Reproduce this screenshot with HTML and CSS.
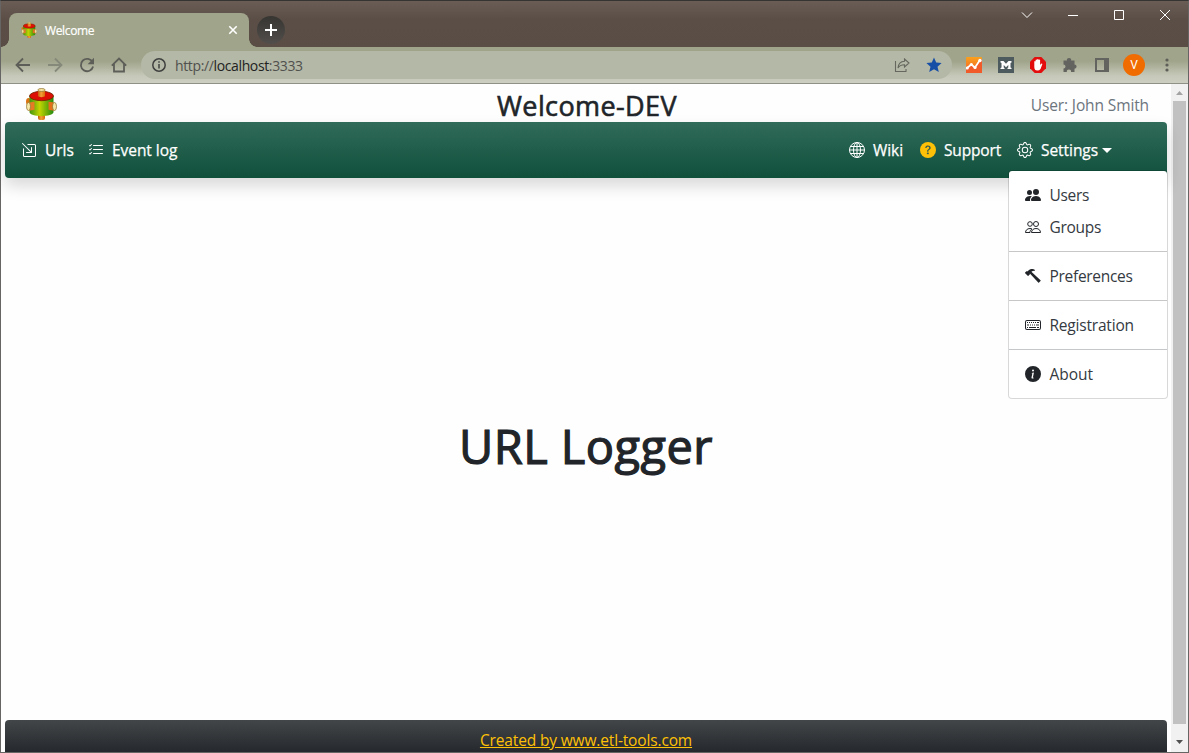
FILE: index.html
```
<!DOCTYPE html>
<html lang="en">
<head>
<meta charset="utf-8">
<title>Welcome</title>
<link rel="stylesheet" href="styles.css">
</head>
<body>
<svg class="defs" width="0" height="0" aria-hidden="true">
  <defs>
    <linearGradient id="can"><stop offset="0" stop-color="#3f9412"/><stop offset=".42" stop-color="#c3d400"/><stop offset="1" stop-color="#238a10"/></linearGradient>
    <linearGradient id="pipe"><stop offset="0" stop-color="#c85c08"/><stop offset=".45" stop-color="#f2a238"/><stop offset="1" stop-color="#d96b08"/></linearGradient>
    <linearGradient id="chart" x2="0" y2="1"><stop offset="0" stop-color="#f9a11d"/><stop offset="1" stop-color="#f15a29"/></linearGradient>
    <symbol id="logo" viewBox="0 0 32 32">
      <rect x="13" y="26" width="7" height="6" rx="2" fill="url(#pipe)"/>
      <ellipse cx="3.500" cy="13.500" rx="2.500" ry="3.500" fill="#dc7511"/>
      <path d="M4.500 8v16c0 5.500 24 5.500 24 0V8z" fill="url(#can)"/>
      <ellipse cx="16.500" cy="8" rx="12" ry="4.700" fill="#dc1004" stroke="#6f2500" stroke-width=".8"/>
      <path d="M13 2.500h7v5.500c0 1.500-7 1.500-7 0z" fill="url(#pipe)"/>
      <ellipse cx="16.500" cy="2" rx="3.700" ry="1.500" fill="#f6e49e" stroke="#8a6b25" stroke-width=".7"/>
      <path d="M4 14.500l5.500-.7v8l-5.500 1z" fill="#e57b25"/>
      <ellipse cx="3.500" cy="18.500" rx="2" ry="4" fill="#f7e9aa" stroke="#8a6b25" stroke-width=".7"/>
      <path d="M29 14.500l-5.500-.7v8l5.500 1z" fill="#e5701a"/>
      <ellipse cx="29.500" cy="18.500" rx="2" ry="4" fill="#f7e9aa" stroke="#8a6b25" stroke-width=".7"/>
    </symbol>
  </defs>
</svg>
<div class="window">
  <header class="titlebar">
    <div class="tab">
      <svg class="favicon"><use href="#logo"/></svg>
      <span class="tab-title">Welcome</span>
      <svg class="tab-close" viewBox="0 0 10 10"><path d="M1.300 1.300l7.400 7.400M8.700 1.300l-7.400 7.400"/></svg>
    </div>
    <div class="new-tab"><svg width="12" height="12" viewBox="0 0 12 12"><path d="M6 0v12M0 6h12"/></svg></div>
    <div class="controls">
      <svg viewBox="0 0 12 12"><path d="M1 3.500l5 5 5-5"/></svg>
      <svg viewBox="0 0 12 12"><path d="M1 6.500h10"/></svg>
      <svg viewBox="0 0 12 12"><path d="M1.500 1.500h9v9h-9z"/></svg>
      <svg viewBox="0 0 12 12"><path d="M1 1l10 10M11 1L1 11"/></svg>
    </div>
  </header>
  <div class="toolbar">
    <div class="nav-buttons">
      <svg viewBox="0 0 16 16"><path d="M15 8H2M8 1.500L1.500 8 8 14.500"/></svg>
      <svg class="disabled" viewBox="0 0 16 16"><path d="M1 8h13M8 1.500L14.500 8 8 14.500"/></svg>
      <svg viewBox="0 0 16 16"><path d="M13.600 5.200A6.200 6.200 0 1 0 14.100 9.500"/><path class="solid" d="M15 .8v6.400H8.600z"/></svg>
      <svg viewBox="0 0 16 16"><path d="M3 7v7.500h10V7M.8 8.700L8 1.600l7.200 7.100"/></svg>
    </div>
    <div class="omnibox">
      <svg class="site-info" viewBox="0 0 14 14"><circle cx="7" cy="7" r="6.200"/><path d="M7 6v4.500M7 3.200v1.600"/></svg>
      <span class="url">http://<b>localhost</b>:3333</span>
      <svg class="share" viewBox="0 0 16 14"><path d="M1.500 3v10.500H12V11M10.500 1L15 5l-4.500 4V6.700C7 6.700 5 8 4 10 4.300 6 7 3.500 10.500 3.300z"/></svg>
      <svg class="star" viewBox="0 0 16 16"><path d="M8 .6l2.200 5 5.400.5-4.100 3.600 1.300 5.400L8 12.200l-4.800 2.900 1.300-5.400L.4 6.100l5.400-.5z"/></svg>
    </div>
    <div class="extensions">
      <svg viewBox="0 0 16 16"><rect width="16" height="16" rx="1" fill="url(#chart)"/><path fill="#f15a29" d="M0 11l5-3.500 4 3 5-7L16 2v14H0z"/><path d="M1 11l4.300-3.500 3.700 3L14 3" fill="none" stroke="#fff" stroke-width="1.700"/><g fill="#fff"><circle cx="1.300" cy="11" r="1.500"/><circle cx="5.300" cy="7.500" r="1.600"/><circle cx="9" cy="10.500" r="1.600"/><circle cx="14" cy="3.500" r="1.700"/></g></svg>
      <svg viewBox="0 0 16 16"><path fill="#4d5a5e" d="M0 0h16v16H0z"/><path fill="#fff" d="M2.500 4h3L8 6.800 10.500 4h3v1.500l-1 .5v4.500l1 .5v1h-4v-1l.8-.5V8L8 10.300 5.700 8v2.500l.8.500v1h-4v-1l1-.5V6l-1-.5z"/></svg>
      <svg viewBox="0 0 16 16"><path fill="#e40d0d" d="M4.700 0h6.600L16 4.700v6.600L11.300 16H4.700L0 11.300V4.700z"/><path fill="#fff" d="M4.300 4.500q.7-.8 1.300 0V3q.8-.9 1.500 0v-.5q.8-.9 1.500 0V3q.8-.8 1.500 0v5l1-1.300q1-.5 1.300.2L10.500 12q-1 1.500-3.200 1.500-3 0-3-3.500z"/></svg>
      <svg viewBox="0 0 16 16"><path fill="#63645f" d="M1.500 3.500H5a2.100 2.100 0 1 1 4.100 0h3.400v4a2.100 2.100 0 1 1 0 4.200V15H9a2.100 2.100 0 1 0-4.100 0H1.500v-3.600a2 2 0 1 0 0-4z"/></svg>
      <svg viewBox="0 0 16 16"><path fill="#63645f" fill-rule="evenodd" d="M1 1h14v14H1zM3 3v10h7V3z"/></svg>
    </div>
    <div class="avatar">V</div>
    <svg class="kebab" viewBox="0 0 4 14"><circle cx="2" cy="2" r="1.600"/><circle cx="2" cy="7" r="1.600"/><circle cx="2" cy="12" r="1.600"/></svg>
  </div>
  <div class="viewport">
    <div class="page">
      <div class="heading">
        <svg class="logo"><use href="#logo"/></svg>
        <h3>Welcome-DEV</h3>
        <span class="user">User: John Smith</span>
      </div>
      <nav class="navbar">
        <a class="nav-link w-urls"><svg class="bi" viewBox="0 0 16 16"><path d="M6.364 2.500a.5.5 0 0 1 .5-.5H13.500A1.500 1.500 0 0 1 15 3.500v10a1.500 1.500 0 0 1-1.500 1.500h-10A1.500 1.500 0 0 1 2 13.500V6.864a.5.5 0 1 1 1 0V13.500a.5.5 0 0 0 .5.5h10a.5.5 0 0 0 .5-.5v-10a.5.5 0 0 0-.5-.5H6.864a.5.5 0 0 1-.5-.5z"/><path d="M11 10.500a.5.5 0 0 1-.5.5h-5a.5.5 0 0 1 0-1h3.793L1.146 1.854a.5.5 0 1 1 .708-.708L10 9.293V5.500a.5.5 0 0 1 1 0v5z"/></svg><span>Urls</span></a>
        <a class="nav-link w-log"><svg class="bi" viewBox="0 0 16 16"><path d="M5 11.500a.5.5 0 0 1 .5-.5h9a.5.5 0 0 1 0 1h-9a.5.5 0 0 1-.5-.5zm0-4a.5.5 0 0 1 .5-.5h9a.5.5 0 0 1 0 1h-9a.5.5 0 0 1-.5-.5zm0-4a.5.5 0 0 1 .5-.5h9a.5.5 0 0 1 0 1h-9a.5.5 0 0 1-.5-.5zM3.854 2.146a.5.5 0 0 1 0 .708l-1.500 1.500a.5.5 0 0 1-.708 0l-.5-.5a.5.5 0 1 1 .708-.708L2 3.293l1.146-1.147a.5.5 0 0 1 .708 0zm0 4a.5.5 0 0 1 0 .708l-1.500 1.500a.5.5 0 0 1-.708 0l-.5-.5a.5.5 0 1 1 .708-.708L2 7.293l1.146-1.147a.5.5 0 0 1 .708 0zm0 4a.5.5 0 0 1 0 .708l-1.500 1.500a.5.5 0 0 1-.708 0l-.5-.5a.5.5 0 0 1 .708-.708l.146.147 1.146-1.147a.5.5 0 0 1 .708 0z"/></svg><span>Event log</span></a>
        <a class="nav-link w-wiki"><svg class="bi stroked" viewBox="0 0 16 16"><circle cx="8" cy="8" r="7.500"/><ellipse cx="8" cy="8" rx="3.500" ry="7.500"/><path d="M8 .5v15M.5 8h15M1.800 4.500h12.400M1.800 11.500h12.400"/></svg><span>Wiki</span></a>
        <a class="nav-link w-support"><svg class="bi" viewBox="0 0 16 16"><circle cx="8" cy="8" r="8" fill="#ffc107"/><path fill="#385d4c" d="M5.255 5.786a.237.237 0 0 0 .241.247h.825c.138 0 .248-.113.266-.250.090-.656.540-1.134 1.342-1.134.686 0 1.314.343 1.314 1.168 0 .635-.374.927-.965 1.371-.673.489-1.206 1.060-1.168 1.987l.003.217a.250.250 0 0 0 .250.246h.811a.250.250 0 0 0 .250-.250v-.105c0-.718.273-.927 1.010-1.486.609-.463 1.244-.977 1.244-2.056 0-1.511-1.276-2.241-2.673-2.241-1.267 0-2.655.590-2.750 2.286zm1.557 5.763c0 .533.425.927 1.010.927.609 0 1.028-.394 1.028-.927 0-.552-.420-.940-1.029-.940-.584 0-1.009.388-1.009.940z"/></svg><span>Support</span></a>
        <div class="settings">
          <a class="nav-link"><svg class="bi" viewBox="0 0 16 16"><path d="M8 4.754a3.246 3.246 0 1 0 0 6.492 3.246 3.246 0 0 0 0-6.492zM5.754 8a2.246 2.246 0 1 1 4.492 0 2.246 2.246 0 0 1-4.492 0z"/><path d="M9.796 1.343c-.527-1.790-3.065-1.790-3.592 0l-.094.319a.873.873 0 0 1-1.255.520l-.292-.160c-1.640-.892-3.433.902-2.540 2.541l.159.292a.873.873 0 0 1-.520 1.255l-.319.094c-1.790.527-1.790 3.065 0 3.592l.319.094a.873.873 0 0 1 .520 1.255l-.160.292c-.892 1.640.901 3.434 2.541 2.540l.292-.159a.873.873 0 0 1 1.255.520l.094.319c.527 1.790 3.065 1.790 3.592 0l.094-.319a.873.873 0 0 1 1.255-.520l.292.160c1.640.893 3.434-.902 2.540-2.541l-.159-.292a.873.873 0 0 1 .520-1.255l.319-.094c1.790-.527 1.790-3.065 0-3.592l-.319-.094a.873.873 0 0 1-.520-1.255l.160-.292c.893-1.640-.902-3.433-2.541-2.540l-.292.159a.873.873 0 0 1-1.255-.520l-.094-.319zm-2.633.283c.246-.835 1.428-.835 1.674 0l.094.319a1.873 1.873 0 0 0 2.693 1.115l.291-.160c.764-.415 1.600.420 1.184 1.185l-.159.292a1.873 1.873 0 0 0 1.116 2.692l.318.094c.835.246.835 1.428 0 1.674l-.319.094a1.873 1.873 0 0 0-1.115 2.693l.160.291c.415.764-.420 1.600-1.185 1.184l-.291-.159a1.873 1.873 0 0 0-2.693 1.116l-.094.318c-.246.835-1.428.835-1.674 0l-.094-.319a1.873 1.873 0 0 0-2.692-1.115l-.292.160c-.764.415-1.600-.420-1.184-1.185l.159-.291A1.873 1.873 0 0 0 1.945 8.930l-.319-.094c-.835-.246-.835-1.428 0-1.674l.319-.094A1.873 1.873 0 0 0 3.060 4.377l-.160-.292c-.415-.764.420-1.600 1.185-1.184l.292.159a1.873 1.873 0 0 0 2.692-1.115l.094-.319z"/></svg><span>Settings</span><i class="caret"></i></a>
          <div class="dropdown">
            <a class="item i-users"><svg class="bi" viewBox="0 0 16 16"><path d="M7 14s-1 0-1-1 1-4 5-4 5 3 5 4-1 1-1 1H7zm4-6a3 3 0 1 0 0-6 3 3 0 0 0 0 6zM5.216 14A2.238 2.238 0 0 1 5 13c0-1.355.680-2.750 1.936-3.720A6.325 6.325 0 0 0 5 9c-4 0-5 3-5 4s1 1 1 1h4.216zM4.500 8a2.500 2.500 0 1 0 0-5 2.500 2.500 0 0 0 0 5z"/></svg><span>Users</span></a>
            <a class="item i-groups"><svg class="bi stroked" viewBox="0 0 16 16"><circle cx="11" cy="5" r="2.500"/><circle cx="5" cy="5" r="2.300"/><path d="M6.500 13.500h9c0-2-1.500-4-4.500-4s-4.500 2-4.500 4zM5 13.500H.5c0-2 1.500-4 4.500-4 1 0 1.500.2 2 .5M5 13.500c0-1.500.6-2.800 2-3.500"/></svg><span>Groups</span></a>
            <hr>
            <a class="item i-pref"><svg class="bi" viewBox="0 0 16 16"><path d="M9.972 2.508a.5.5 0 0 0-.160-.556l-.178-.129a5.009 5.009 0 0 0-2.076-.783C6.215.862 4.504 1.229 2.840 3.133H1.786a.5.5 0 0 0-.354.147L.146 4.567a.5.5 0 0 0 0 .706l2.571 2.579a.5.5 0 0 0 .708 0l1.286-1.290a.5.5 0 0 0 .146-.353V5.570l8.387 8.873A.5.5 0 0 0 14 14.500l1.500-1.500a.5.5 0 0 0 .017-.689l-9.129-8.630c.747-.456 1.772-.839 3.112-.839a.5.5 0 0 0 .472-.334z"/></svg><span>Preferences</span></a>
            <hr>
            <a class="item i-reg"><svg class="bi" viewBox="0 0 16 16"><path fill-rule="evenodd" d="M2 3h12a2 2 0 0 1 2 2v6a2 2 0 0 1-2 2H2a2 2 0 0 1-2-2V5a2 2 0 0 1 2-2zm0 1a1 1 0 0 0-1 1v6a1 1 0 0 0 1 1h12a1 1 0 0 0 1-1V5a1 1 0 0 0-1-1z"/><path d="M2 5h1v1H2zM4 5h1v1H4zM6 5h1v1H6zM8 5h1v1H8zM10 5h1v1h-1zM12 5h2v1h-2zM2 7.500h2v1H2zM5 7.500h1v1H5zM7 7.500h1v1H7zM9 7.500h1v1H9zM11 7.500h3v1h-3zM2 10h1v1H2zM4 10h7v1H4zM12 10h2v1h-2z"/></svg><span>Registration</span></a>
            <hr>
            <a class="item i-about"><svg class="bi" viewBox="0 0 16 16"><path d="M8 16A8 8 0 1 0 8 0a8 8 0 0 0 0 16zm.930-9.412-1 4.705c-.070.340.029.533.304.533.194 0 .487-.070.686-.246l-.088.416c-.287.346-.920.598-1.465.598-.703 0-1.002-.422-.808-1.319l.738-3.468c.064-.293.006-.399-.287-.470l-.451-.081.082-.381 2.290-.287zM8 5.500a1 1 0 1 1 0-2 1 1 0 0 1 0 2z"/></svg><span>About</span></a>
          </div>
        </div>
      </nav>
      <main><h1>URL Logger</h1></main>
      <footer><a>Created by www.etl-tools.com</a></footer>
    </div>
    <div class="scrollbar">
      <svg viewBox="0 0 7 4"><path fill="#a3a3a3" d="M0 4L3.500 0 7 4z"/></svg>
      <div class="thumb"></div>
      <svg viewBox="0 0 7 4"><path fill="#505050" d="M0 0h7L3.500 4z"/></svg>
    </div>
  </div>
</div>
</body>
</html>
```
FILE: styles.css
```
* { box-sizing: border-box; }
body { margin: 0; font-family: "Open Sans", "Noto Sans", sans-serif; color: #212529; }
.defs { display: block; }
svg { flex: none; }
.window { width: 1189px; height: 753px; border: 1px solid #666563; border-top-color: #353432; display: flex; flex-direction: column; overflow: hidden; background: #fff; }

.titlebar { height: 46px; flex: none; display: flex; padding-left: 8px; background: linear-gradient(#695d56, #5b4e46 40%, #5a4d45); }
.tab { position: relative; width: 240px; height: 34px; margin-top: 12px; padding: 0 11px 0 12px; display: flex; align-items: center; background: #9fa48a; border-radius: 8px 8px 0 0; color: #fff; font-size: 12px; }
.tab::before, .tab::after { content: ""; position: absolute; bottom: 0; width: 8px; height: 8px; }
.tab::before { left: -8px; background: radial-gradient(circle at 0 0, transparent 7.5px, #9fa48a 8px); }
.tab::after { right: -8px; background: radial-gradient(circle at 100% 0, transparent 7.5px, #9fa48a 8px); }
.favicon { width: 16px; height: 16px; }
.tab-title { margin-left: 8px; letter-spacing: -.35px; flex: 1; -webkit-text-stroke: .2px; }
.tab-close { width: 10px; height: 10px; stroke: #fff; stroke-width: 1.6; }
.new-tab { width: 28px; height: 28px; margin: 15px 0 0 8px; border-radius: 50%; background: linear-gradient(#373532, #514e4b); display: flex; align-items: center; justify-content: center; }
.new-tab path { stroke: #fff; stroke-width: 2; }
.controls { margin-left: auto; padding: 8px 17px 0 0; display: flex; gap: 34px; }
.controls svg { width: 12px; height: 12px; fill: none; stroke: #fff; }

.toolbar { height: 37px; flex: none; display: flex; align-items: center; padding: 0 17px 1px 14px; background: linear-gradient(#9fa48a 0, #9fa48a 38%, #c6c9b9 78%, #cccfc1 97%, #8e9185 97%); }
.nav-buttons { display: flex; gap: 16px; width: 126px; }
.nav-buttons svg { width: 16px; height: 16px; fill: none; stroke: #5d5e58; stroke-width: 1.8; }
.nav-buttons .disabled { stroke: #85897a; }
.nav-buttons .solid { fill: #5d5e58; stroke: none; }
.omnibox { width: 811px; height: 28px; padding: 0 10px 0 11px; border-radius: 14px; background: #b4b8a6; display: flex; align-items: center; }
.site-info { width: 14px; height: 14px; fill: none; stroke: #3f403f; stroke-width: 1.5; }
.url { flex: 1; margin-left: 9px; font-size: 14px; letter-spacing: -.37px; color: #50514e; }
.url b { font-weight: 400; color: #222; }
.share { width: 16px; height: 14px; fill: none; stroke: #66685f; stroke-width: 1.1; margin-right: 16px; }
.star { width: 16px; height: 16px; fill: #174ea6; }
.extensions { display: flex; gap: 16px; margin-left: 14px; }
.extensions svg { width: 16px; height: 16px; }
.avatar { width: 22px; height: 22px; margin-left: 13px; border-radius: 50%; background: #f06c00; color: #fff; font: 12px/22px Roboto, sans-serif; text-align: center; }
.kebab { width: 4px; height: 14px; margin-left: auto; margin-right: 2px; fill: #5d5e58; }

.viewport { flex: 1; display: flex; min-height: 0; }
.page { flex: 1; min-width: 0; display: flex; flex-direction: column; padding: 0 4px; background: #fefefe; }
.heading { height: 38px; flex: none; display: grid; grid-template-columns: 1fr auto 1fr; align-items: start; padding: 0 18px 0 20px; }
.logo { width: 32px; height: 32px; margin-top: 4px; }
.heading h3 { margin: 5px 0 0; font-size: 27px; line-height: 34px; font-weight: 500; letter-spacing: .4px; -webkit-text-stroke: .6px; }
.user { justify-self: end; margin-top: 9px; font-size: 15.500px; line-height: 24px; color: #6c757d; letter-spacing: -.12px; }

.navbar { position: relative; z-index: 1; height: 56px; flex: none; display: flex; align-items: center; padding-left: 16px; border-radius: 4px; background: linear-gradient(#316b5a, #0f503b); box-shadow: 0 8px 16px rgba(0,0,0,.15); color: #fff; }
.nav-link { display: flex; align-items: center; gap: 8px; font-size: 15.500px; line-height: 24px; white-space: nowrap; letter-spacing: -.05px; }
.nav-link span { -webkit-text-stroke: .25px; }
.bi { width: 16px; height: 16px; fill: currentColor; }
.bi.stroked { fill: none; stroke: currentColor; }
.w-urls { width: 67px; }
.w-log { width: 761px; }
.w-wiki { width: 71px; }
.w-support { width: 97px; letter-spacing: -.15px; }
.settings { position: relative; width: 150px; }
.caret { margin-left: -4px; border: 5px solid transparent; border-top-color: #fff; border-bottom: 0; }
.dropdown { position: absolute; top: 32px; right: -1px; width: 160px; height: 229px; padding: 8px 0; background: #fff; background-clip: padding-box; border: 1px solid rgba(0,0,0,.15); border-radius: 4px; color: #212529; }
.item { height: 32px; padding-left: 16px; display: flex; align-items: center; gap: 8px; font-size: 15.500px; letter-spacing: -.3px; }
.i-reg { letter-spacing: -.2px; }
.i-about { letter-spacing: 0; }
.item span { color: #343a3f; margin-left: .5px; }
.dropdown hr { height: 1px; margin: 8px 0; border: 0; background: #c6c7c8; }

main { flex: 1; display: flex; justify-content: center; align-items: center; }
h1 { margin: 0 0 6px; font-size: 47px; line-height: 58px; font-weight: 500; letter-spacing: .45px; -webkit-text-stroke: 1.2px; }
footer { height: 32px; flex: none; padding-top: 8px; text-align: center; border-radius: 4px 4px 0 0; background: linear-gradient(#424649, #25282c); }
footer a { color: #ffc107; font-size: 15.500px; line-height: 24px; letter-spacing: -.15px; text-decoration: underline; display: inline-block; }

.scrollbar { width: 17px; flex: none; display: flex; flex-direction: column; align-items: center; justify-content: space-between; padding: 7px 0 8px; background: #f1f1f1; }
.scrollbar svg { width: 7px; height: 4px; }
.thumb { width: 13px; height: 623px; margin-bottom: 11px; background: #c1c1c1; }
```
